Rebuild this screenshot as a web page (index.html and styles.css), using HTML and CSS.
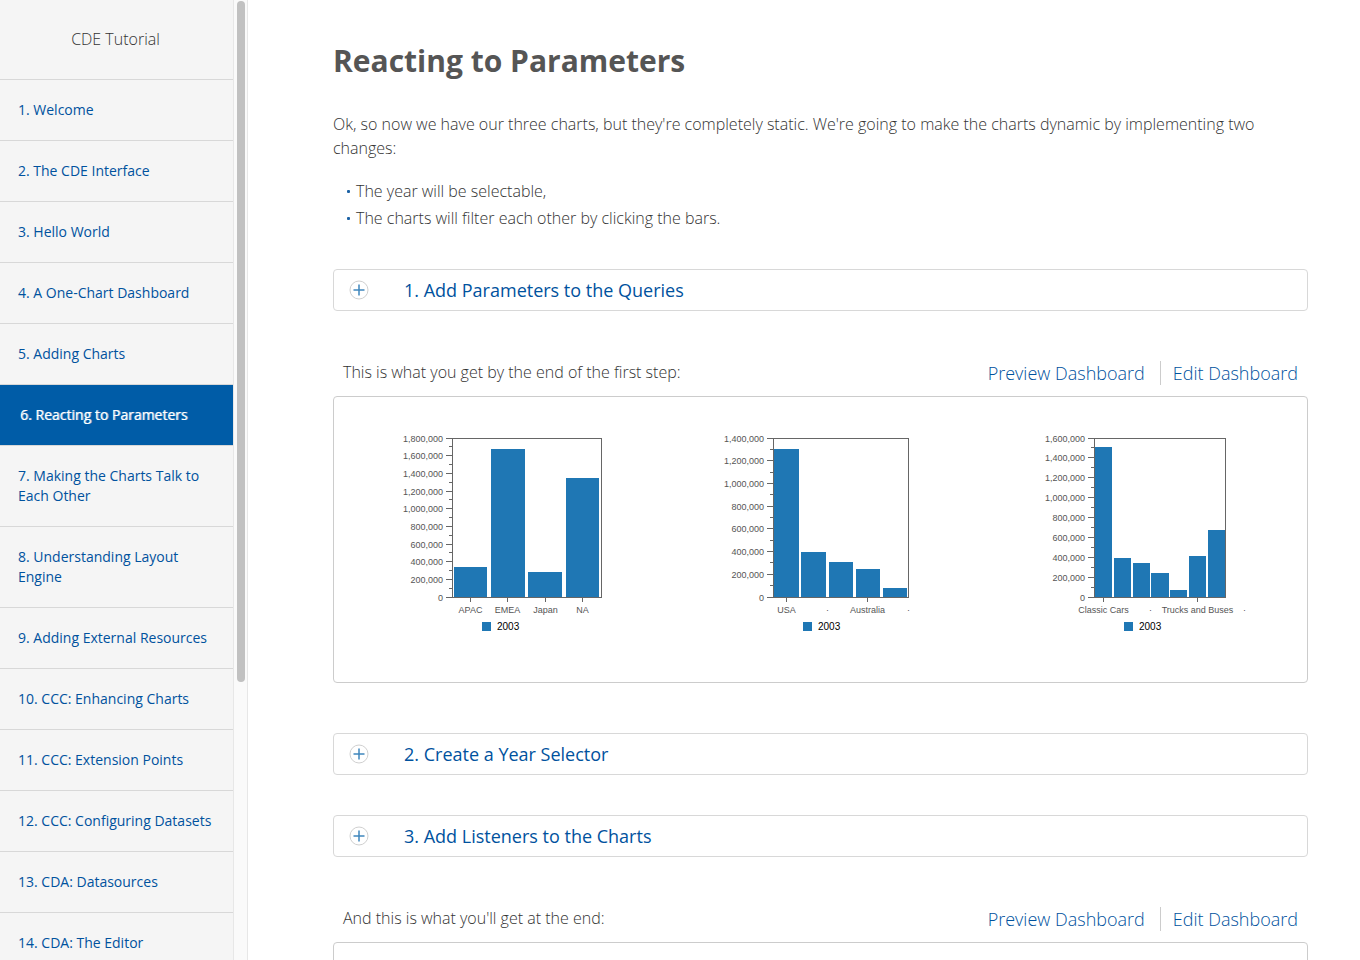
FILE: index.html
```html
<!DOCTYPE html>
<html lang="en">
<head>
<meta charset="utf-8">
<meta name="viewport" content="width=device-width, initial-scale=1">
<title>CDE Tutorial - Reacting to Parameters</title>
<link rel="stylesheet" href="styles.css">
</head>
<body>
<div class="layout">
  <aside class="sidebar">
    <div class="sidebar-scroll">
      <div class="sidebar-title">CDE Tutorial</div>
      <nav aria-label="Tutorial steps">
        <ul class="nav">
          <li><a href="#1">1. Welcome</a></li>
          <li><a href="#2">2. The CDE Interface</a></li>
          <li><a href="#3">3. Hello World</a></li>
          <li><a href="#4">4. A One-Chart Dashboard</a></li>
          <li><a href="#5">5. Adding Charts</a></li>
          <li><a class="active" href="#6" aria-current="page">6. Reacting to Parameters</a></li>
          <li><a href="#7">7. Making the Charts Talk to Each Other</a></li>
          <li><a href="#8">8. Understanding Layout Engine</a></li>
          <li><a href="#9">9. Adding External Resources</a></li>
          <li><a href="#10">10. CCC: Enhancing Charts</a></li>
          <li><a href="#11">11. CCC: Extension Points</a></li>
          <li><a href="#12">12. CCC: Configuring Datasets</a></li>
          <li><a href="#13">13. CDA: Datasources</a></li>
          <li><a href="#14">14. CDA: The Editor</a></li>
        </ul>
      </nav>
    </div>
    <div class="track" aria-hidden="true"><div class="thumb"></div></div>
  </aside>
  <main class="content">
    <h1>Reacting to Parameters</h1>
    <p class="intro">Ok, so now we have our three charts, but they're completely static. We're going to make the charts dynamic by implementing two changes:</p>
    <ul class="changes">
      <li>The year will be selectable,</li>
      <li>The charts will filter each other by clicking the bars.</li>
    </ul>

    <button class="step" type="button" aria-expanded="false">
      <svg class="plus" viewBox="0 0 20 20" aria-hidden="true"><circle cx="10" cy="10" r="9"/><path d="M10 4.5v11M4.5 10h11" stroke-width="1.5"/></svg>
      <span>1. Add Parameters to the Queries</span>
    </button>

    <div class="result-head">
      <span>This is what you get by the end of the first step:</span>
      <div class="links"><a href="#preview">Preview Dashboard</a><a href="#edit">Edit Dashboard</a></div>
    </div>
    <section class="card" aria-label="Dashboard after the first step">
      <svg class="chart" id="territory" viewBox="0 0 241 225" role="img" aria-label="Sales by territory"></svg>
      <svg class="chart" id="country" viewBox="0 0 241 225" role="img" aria-label="Sales by country"></svg>
      <svg class="chart" id="product" viewBox="0 0 241 225" role="img" aria-label="Sales by product line"></svg>
    </section>

    <button class="step" type="button" aria-expanded="false">
      <svg class="plus" viewBox="0 0 20 20" aria-hidden="true"><circle cx="10" cy="10" r="9"/><path d="M10 4.5v11M4.5 10h11" stroke-width="1.5"/></svg>
      <span>2. Create a Year Selector</span>
    </button>
    <button class="step" type="button" aria-expanded="false">
      <svg class="plus" viewBox="0 0 20 20" aria-hidden="true"><circle cx="10" cy="10" r="9"/><path d="M10 4.5v11M4.5 10h11" stroke-width="1.5"/></svg>
      <span>3. Add Listeners to the Charts</span>
    </button>

    <div class="result-head">
      <span>And this is what you'll get at the end:</span>
      <div class="links"><a href="#preview-final">Preview Dashboard</a><a href="#edit-final">Edit Dashboard</a></div>
    </div>
    <section class="card" aria-label="Final dashboard"></section>
  </main>
</div>
<script src="charts.js"></script>
</body>
</html>
```
FILE: styles.css
```css
* { box-sizing: border-box; }

body {
  margin: 0;
  font-family: "Open Sans", "Noto Sans", sans-serif;
  font-size: 16px;
  font-weight: 300;
  line-height: 24px;
  color: #333;
  background: #fff;
}

a { color: #00529e; text-decoration: none; }

.layout { display: flex; height: 100vh; }

/* Sidebar */
.sidebar { display: flex; flex: none; width: 248px; }

.sidebar-scroll {
  flex: 1;
  overflow-y: auto;
  scrollbar-width: none;
  background: #f5f5f5;
}

.sidebar-title {
  padding: 27px 2px 28px 0;
  text-align: center;
  line-height: 24px;
  border-bottom: 1px solid #d8d8d8;
}

.nav { margin: 0; padding: 0; list-style: none; }

.nav li { border-bottom: 1px solid #d8d8d8; }

.nav a {
  display: block;
  padding: 20px 18px;
  font-size: 14px;
  font-weight: 400;
  line-height: 20px;
}

.nav .active {
  padding-left: 20px;
  color: #fff;
  text-shadow: 1px 0 rgba(255, 255, 255, 0.6);
  background: #005ca7;
}

.track {
  flex: none;
  width: 15px;
  padding: 1px 2px 0 3px;
  background: #fafafa;
  border: solid #e7e7e7;
  border-width: 0 1px;
}

.thumb { width: 8px; height: 71%; border-radius: 4px; background: #c1c1c1; }

/* Content */
.content {
  flex: 1;
  min-width: 0;
  padding: 40px 52px 40px 85px;
  overflow-y: auto;
  scrollbar-width: none;
}

h1 {
  margin: 0 0 30px;
  font-size: 30px;
  font-weight: 700;
  line-height: 42px;
  color: #555;
}

.intro { margin: 0 0 18px; }

.changes { margin: 0 0 37px; padding: 0 0 0 14px; list-style: none; line-height: 27px; }

.changes li { display: flex; align-items: center; gap: 6px; }

.changes li::before {
  content: "";
  width: 3px;
  height: 3px;
  border-radius: 1px;
  background: #1c62a5;
}

.step {
  display: flex;
  align-items: center;
  gap: 35px;
  width: 100%;
  height: 42px;
  margin: 0 0 40px;
  padding: 0 15px;
  font: 400 18px/24px "Open Sans", "Noto Sans", sans-serif;
  color: #00529e;
  text-align: left;
  background: #fff;
  border: 1px solid #d8d8d8;
  border-radius: 4px;
  cursor: pointer;
}

.plus { width: 20px; height: 20px; fill: none; }
.plus circle { stroke: #d0d0d0; }
.plus path { stroke: #3f86bd; }

.result-head {
  display: flex;
  justify-content: space-between;
  margin: 50px 0 11px;
  padding: 0 10px;
}

.result-head > span { line-height: 22px; }

.links { display: flex; font-size: 18px; }

.links a + a { margin-left: 15px; padding-left: 12px; border-left: 1px solid #ccc; }

.card {
  display: grid;
  grid-template-columns: repeat(3, 1fr);
  justify-items: center;
  min-height: 287px;
  margin-bottom: 50px;
  padding: 20px 5px;
  border: 1px solid #ccc;
  border-radius: 4px;
}

/* Charts */
.chart {
  width: 241px;
  height: 225px;
  font-family: "Liberation Sans", Arial, sans-serif;
  font-size: 9px;
  font-weight: 400;
}

.chart .axis { fill: none; stroke: #666; }
.chart .bar { fill: #1f77b4; }
.chart .label { fill: #555; }
.chart .value { text-anchor: end; }
.chart .category { text-anchor: middle; }
.chart .legend { fill: #000; font-size: 10px; }
```
FILE: charts.js
```js
const NS = "http://www.w3.org/2000/svg";
const PLOT = { left: 73.5, top: 21.5, bottom: 180.5 };

function add(svg, name, attrs, text) {
  const el = document.createElementNS(NS, name);
  for (const key in attrs) el.setAttribute(key, attrs[key]);
  if (text !== undefined) el.textContent = text;
  svg.appendChild(el);
}

// bars: [x, width, top]; categories: [centre, text, has tick]
function drawChart(id, right, max, bars, categories) {
  const svg = document.getElementById(id);
  bars.forEach(([x, width, top]) =>
    add(svg, "rect", { class: "bar", x, y: top, width, height: 180 - top }));

  add(svg, "rect", {
    class: "axis", x: PLOT.left, y: PLOT.top,
    width: right - PLOT.left, height: PLOT.bottom - PLOT.top
  });

  for (let value = 0; value <= max; value += 100000) {
    const y = Math.floor(180 - 159 * value / max) + 0.5;
    const major = value % 200000 === 0;
    add(svg, "path", { class: "axis", d: `M${major ? 67 : 70} ${y}H73` });
    if (major) {
      add(svg, "text", { class: "label value", x: 64, y: y + 3 }, value.toLocaleString("en-US"));
    }
  }

  categories.forEach(([x, text, tick]) => {
    if (tick) add(svg, "path", { class: "axis", d: `M${x} 181v4` });
    add(svg, "text", { class: "label category", x, y: 196 }, text);
  });

  add(svg, "rect", { class: "bar", x: 103, y: 205, width: 9, height: 9 });
  add(svg, "text", { class: "legend", x: 118, y: 213 }, "2003");
}

drawChart("territory", 222.5, 1800000,
  [[75, 33, 150], [112, 34, 32], [149, 34, 155], [187, 33, 61]],
  [[91.5, "APAC", true], [128.5, "EMEA", true], [166.5, "Japan", true], [203.5, "NA", true]]);

drawChart("country", 208.5, 1400000,
  [[74, 25, 32], [101, 25, 135], [129, 24, 145], [156, 24, 152], [183, 24, 171]],
  [[86.5, "USA", true], [127.5, "·"], [167.5, "Australia", true], [208.5, "·"]]);

drawChart("product", 204.5, 1600000,
  [[74, 17, 30], [93, 17, 141], [112, 17, 146], [130, 18, 156], [149, 17, 173], [168, 17, 139], [187, 17, 113]],
  [[82.5, "Classic Cars", true], [129.5, "·"], [176.5, "Trucks and Buses", true], [223.5, "·"]]);
```
